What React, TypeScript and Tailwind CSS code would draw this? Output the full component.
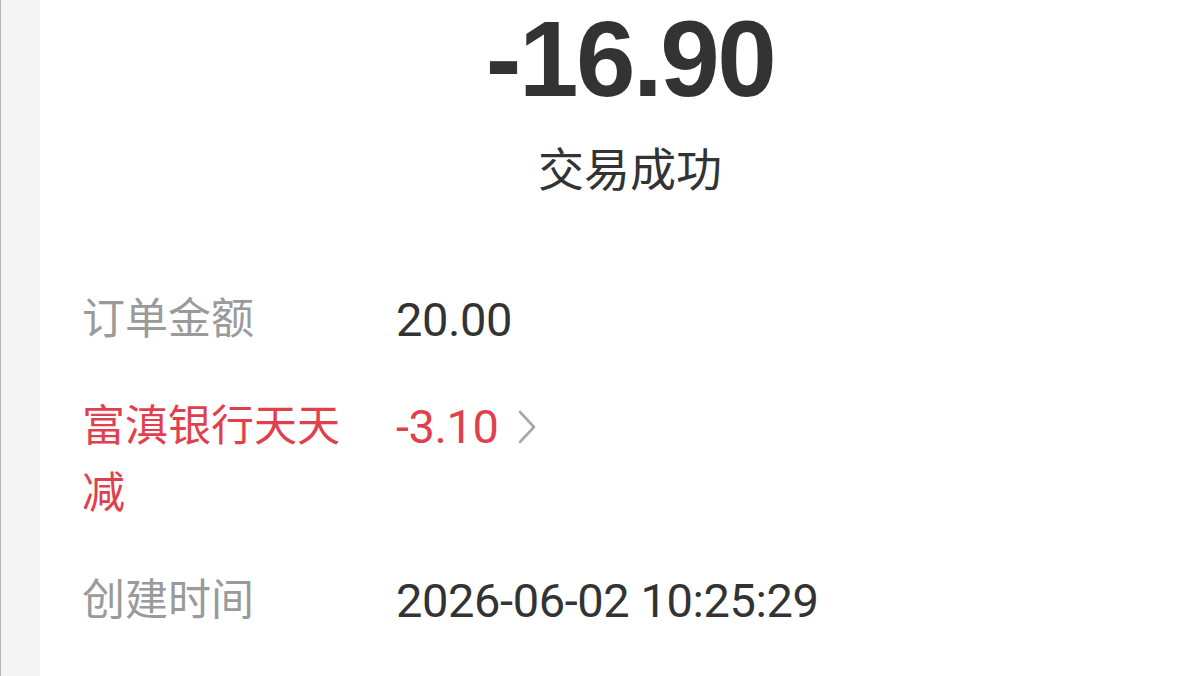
import React from "react";

const sans = { fontFamily: '"Roboto", "Noto Sans CJK SC", sans-serif' };

function Chevron() {
  return (
    <svg width="20" height="34" viewBox="0 0 20 34" fill="none" className="ml-[18px]">
      <path d="M3 2 L17 17 L3 32" stroke="#a8a8a8" strokeWidth="2.6" strokeLinecap="round" strokeLinejoin="round" />
    </svg>
  );
}

function Row({ label, value, red, arrow }: { label: string; value: string; red?: boolean; arrow?: boolean }) {
  return (
    <div className="flex items-start leading-[67px]">
      <div className={`w-[288px] shrink-0 text-[43px] ${red ? "text-[#e23f4c]" : "text-[#9a9a9a]"}`}>{label}</div>
      <div className="ml-[26px] flex items-center h-[67px]">
        <span className={`text-[47px] tracking-[-0.4px] ${red ? "text-[#e23f4c]" : "text-[#333333]"}`}>{value}</span>
        {arrow && <Chevron />}
      </div>
    </div>
  );
}

export default function App() {
  return (
    <div className="flex h-[676px] w-full overflow-hidden bg-white" style={sans}>
      {/* left gutter */}
      <div className="w-[40px] shrink-0 bg-[#f4f4f4] border-l border-[#b8b8b8]" />

      <div className="w-[1180px] shrink-0 flex flex-col">
        <div className="flex flex-col items-center">
          <div
            className="pt-[6px] text-[107px] leading-[107px] font-bold tracking-[-2.5px] text-[#333333]"
            style={{ fontFamily: '"Liberation Sans", sans-serif' }}
          >
            -16.90
          </div>
          <div className="mt-[24px] text-[46px] leading-[67px] text-[#333333]">交易成功</div>
        </div>

        <div className="mt-[82px] pl-[42px] flex flex-col gap-[40px]">
          <Row label="订单金额" value="20.00" />
          <Row label="富滇银行天天减" value="-3.10" red arrow />
          <Row label="创建时间" value="2026-06-02 10:25:29" />
        </div>
      </div>
    </div>
  );
}
